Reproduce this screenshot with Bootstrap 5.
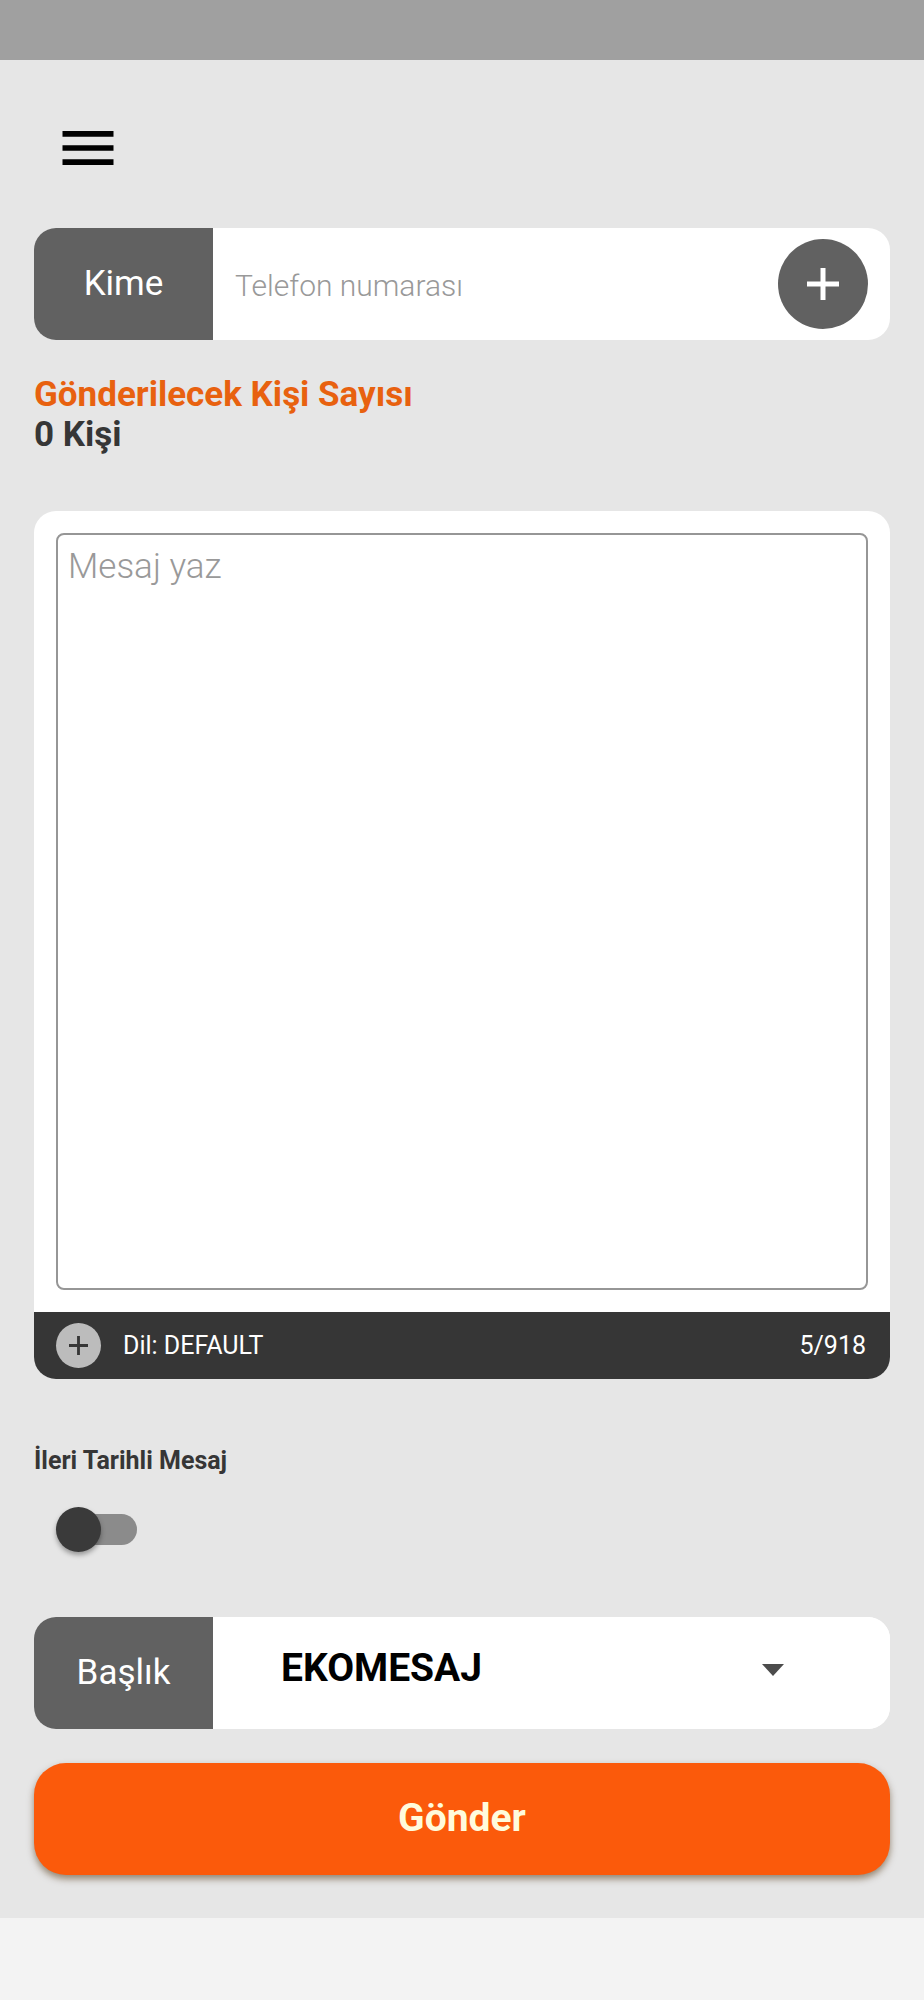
<!DOCTYPE html>
<html lang="tr">
<head>
<meta charset="utf-8">
<meta name="viewport" content="width=device-width, initial-scale=1">
<title>Mesaj Gönder</title>
<link href="https://cdn.jsdelivr.net/npm/bootstrap@5.3.0/dist/css/bootstrap.min.css" rel="stylesheet">
<style>
  body { font-family: Roboto, "Noto Sans", sans-serif; background: #f3f3f3; color: #363636; }
  .status-strip { height: 60px; background: #a0a0a0; }
  .screen { background: #e6e6e6; padding: 54px 34px 43px; }
  .menu-btn { margin: 0 0 46px 20px; line-height: 0; color: #000; }
  .field-row { min-height: 112px; border-radius: 22px; }
  .field-tag { width: 179px; background: #616161; font-size: 35px; line-height: 40px; }
  .phone-input { padding: 6px 22px 2px; font-size: 30px; line-height: 40px; }
  .phone-input::placeholder, .message-input::placeholder { color: #999; font-weight: 300; opacity: 1; }
  .add-btn { width: 90px; height: 90px; margin-right: 22px; background: #616161; color: #fff; }
  .recipients { margin: 35px 0 56px; font-size: 35px; line-height: 40px; }
  .accent { color: #e8610f; }
  .message-card { border-radius: 22px; }
  .message-body { padding: 22px; }
  .message-input { padding: 12px 10px; min-height: 240px; border: 2px solid #969696; border-radius: 8px; font-size: 35px; line-height: 40px; resize: none; }
  .message-bar { min-height: 67px; padding: 11px 24px 11px 22px; gap: 22px; background: #363636; font-size: 25px; line-height: 28px; }
  .lang-btn { width: 45px; height: 45px; background: #bcbcbc; color: #363636; }
  .schedule { margin: 68px 0 65px; font-size: 25px; line-height: 28px; }
  .toggle { appearance: none; position: relative; width: 81px; height: 45px; margin: 32px 0 0 22px; }
  .toggle::before { content: ""; position: absolute; inset: 7px 0 7px 14px; border-radius: 16px; background: #8b8b8b; }
  .toggle::after { content: ""; position: absolute; top: 0; left: 0; width: 45px; height: 45px; border-radius: 50%; background: #3a3a3a; box-shadow: 0 3px 5px rgba(0,0,0,.35); }
  .toggle:checked::after { left: auto; right: 0; }
  .title-select { padding: 0 140px 10px 68px; font-size: 39px; color: #000;
    background: #fff url("data:image/svg+xml,%3Csvg xmlns='http://www.w3.org/2000/svg' viewBox='0 0 22 12'%3E%3Cpath d='M0 0h22L11 12z' fill='%234c4c4c'/%3E%3C/svg%3E") no-repeat right 106px top 47px / 22px 12px; }
  .send-btn { min-height: 112px; margin-top: 34px; padding: 0 0 2px; border-radius: 32px; background: #fb5a0b; color: #fffbdc; font-size: 39px; box-shadow: 0 4px 7px rgba(70,40,0,.5); }
  .send-btn:hover { background: #e9520a; color: #fffbdc; }
  .nav-strip { height: 82px; }
</style>
</head>
<body>
<div class="d-flex flex-column min-vh-100">
  <div class="status-strip flex-shrink-0"></div>

  <main class="screen flex-grow-1 d-flex flex-column">
    <button type="button" class="menu-btn btn p-0 border-0 align-self-start" aria-label="Menü">
      <svg width="68" height="68" viewBox="0 0 24 24" fill="currentColor"><path d="M3 18h18v-2H3v2zm0-5h18v-2H3v2zm0-7v2h18V6H3z"/></svg>
    </button>

    <div class="field-row d-flex bg-white overflow-hidden">
      <label for="phone" class="field-tag flex-shrink-0 d-flex align-items-center justify-content-center text-white">Kime</label>
      <input id="phone" type="tel" class="phone-input form-control border-0 rounded-0 shadow-none" placeholder="Telefon numarası">
      <button type="button" class="add-btn btn p-0 border-0 rounded-circle flex-shrink-0 align-self-center d-flex align-items-center justify-content-center" aria-label="Kişi ekle">
        <svg width="32" height="32" viewBox="0 0 32 32" fill="none" stroke="currentColor" stroke-width="5"><path d="M16 0v32M0 16h32"/></svg>
      </button>
    </div>

    <div class="recipients fw-bold">
      <div class="accent">Gönderilecek Kişi Sayısı</div>
      <div>0 Kişi</div>
    </div>

    <section class="message-card bg-white overflow-hidden flex-grow-1 d-flex flex-column">
      <div class="message-body flex-grow-1 d-flex">
        <textarea class="message-input form-control shadow-none" placeholder="Mesaj yaz" aria-label="Mesaj"></textarea>
      </div>
      <div class="message-bar d-flex align-items-center text-white">
        <button type="button" class="lang-btn btn p-0 border-0 rounded-circle d-flex align-items-center justify-content-center" aria-label="Dil seç">
          <svg width="19" height="19" viewBox="0 0 20 20" fill="none" stroke="currentColor" stroke-width="3"><path d="M10 0v20M0 10h20"/></svg>
        </button>
        <span>Dil: DEFAULT</span>
        <span class="ms-auto">5/918</span>
      </div>
    </section>

    <div class="schedule d-flex flex-column align-items-start">
      <label for="schedule" class="fw-bold">İleri Tarihli Mesaj</label>
      <input id="schedule" type="checkbox" role="switch" class="toggle">
    </div>

    <div class="field-row d-flex bg-white overflow-hidden">
      <label for="title" class="field-tag flex-shrink-0 d-flex align-items-center justify-content-center text-white">Başlık</label>
      <select id="title" class="title-select form-select border-0 rounded-0 shadow-none fw-bold">
        <option selected>EKOMESAJ</option>
      </select>
    </div>

    <button type="submit" class="send-btn btn w-100 border-0 fw-bold">Gönder</button>
  </main>

  <div class="nav-strip flex-shrink-0"></div>
</div>
<script src="https://cdn.jsdelivr.net/npm/bootstrap@5.3.0/dist/js/bootstrap.bundle.min.js"></script>
</body>
</html>
